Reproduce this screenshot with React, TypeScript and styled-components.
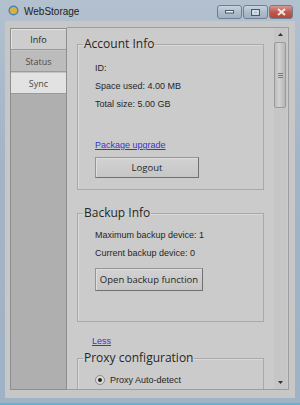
import styled, { createGlobalStyle } from 'styled-components';

const Global = createGlobalStyle`
  html, body { margin: 0; padding: 0; background: #9fb1c4; }
  body { font-family: 'Liberation Sans', Arial, sans-serif; }
`;

const Window = styled.div`
  width: 300px;
  height: 405px;
  box-sizing: border-box;
  display: flex;
  flex-direction: column;
  background: linear-gradient(180deg, #b3c1cf 0%, #a3b4c6 40%, #a0b2c5 100%);
  border-bottom: 2px solid #5fb4cf;
  overflow: hidden;
`;

const TitleBar = styled.div`
  height: 21px;
  display: flex;
  align-items: center;
  padding: 0 7px 0 8px;
  gap: 5px;
  flex-shrink: 0;
`;

const TitleText = styled.span`
  font-family: 'Liberation Sans', Arial, sans-serif;
  font-size: 10px;
  color: #1c1c1c;
  flex: 1;
  margin-top: 1px;
`;

const CaptionButtons = styled.div`
  display: flex;
  gap: 1px;
  align-self: flex-start;
  margin-top: 5px;
`;

const CaptionButton = styled.div<{ $close?: boolean }>`
  width: ${({ $close }) => ($close ? 22 : 23)}px;
  height: 12px;
  border: 1px solid #6f7f91;
  border-radius: 3px;
  display: flex;
  align-items: center;
  justify-content: center;
  background: ${({ $close }) =>
    $close
      ? 'linear-gradient(180deg, #d39a92 0%, #c05a4b 50%, #b4473a 100%)'
      : 'linear-gradient(180deg, #c8d3df 0%, #aebccb 50%, #a2b2c3 100%)'};
`;

const Client = styled.div`
  flex: 1;
  margin: 0 5px 5px 5px;
  background: #c7c7c7;
  display: flex;
  padding: 6px 6px 8px 5px;
  min-height: 0;
`;

const TabColumn = styled.div`
  width: 55px;
  background: #afafaf;
  border: 1px solid #8e8e8e;
  border-top: none;
  display: flex;
  flex-direction: column;
  margin-top: 1px;
`;

const Tab = styled.div<{ $bg: string; $active?: boolean }>`
  height: 20px;
  display: flex;
  align-items: center;
  justify-content: center;
  font-family: 'Open Sans', 'Noto Sans', sans-serif;
  font-size: 9px;
  color: ${({ $active }) => ($active ? '#222' : '#4a4a4a')};
  background: ${({ $bg }) => $bg};
  border-top: 1px solid ${({ $active }) => ($active ? '#8e8e8e' : '#c4c4c4')};
  border-bottom: 1px solid #9a9a9a;
  box-shadow: ${({ $active }) => ($active ? 'inset 1px 1px 0 #e2e2e2' : 'none')};
`;

const Panel = styled.div`
  flex: 1;
  display: flex;
  background: #cbcbcb;
  border: 1px solid #9d9d9d;
  border-left: none;
  min-height: 0;
  overflow: hidden;
`;

const Content = styled.div`
  flex: 1;
  padding: 8px 9px 0 10px;
  overflow: hidden;
  display: flex;
  flex-direction: column;
`;

const Group = styled.fieldset<{ $h: number; $top?: number }>`
  margin: ${({ $top }) => $top ?? 0}px 0 0;
  padding: 0 0 0 17px;
  border: 1px solid #a9a9a9;
  box-shadow: inset 1px 1px 0 #d9d9d9;
  height: ${({ $h }) => $h}px;
  box-sizing: border-box;
  flex-shrink: 0;
`;

const Legend = styled.legend`
  font-family: 'Open Sans', 'Noto Sans', sans-serif;
  font-size: 12px;
  color: #262626;
  padding: 0 1px;
  margin-left: -12px;
  line-height: 16px;
`;

const Line = styled.div<{ $top?: number }>`
  font-family: 'Liberation Sans', Arial, sans-serif;
  font-size: 9px;
  color: #262626;
  height: 18px;
  line-height: 18px;
  margin-top: ${({ $top }) => $top ?? 0}px;
`;

const Link = styled.a<{ $top?: number; $left?: number }>`
  display: block;
  font-family: 'Liberation Sans', Arial, sans-serif;
  font-size: 9px;
  color: #3636d0;
  text-decoration: underline;
  width: fit-content;
  margin-top: ${({ $top }) => $top ?? 0}px;
  margin-left: ${({ $left }) => $left ?? 0}px;
  line-height: 12px;
`;

const Button = styled.div<{ $w: number; $h: number; $top: number }>`
  width: ${({ $w }) => $w}px;
  height: ${({ $h }) => $h}px;
  margin-top: ${({ $top }) => $top}px;
  box-sizing: border-box;
  border: 1px solid #959595;
  border-right-color: #707070;
  border-bottom-color: #707070;
  background: linear-gradient(180deg, #d2d2d2 0%, #c6c6c6 100%);
  box-shadow: inset 1px 1px 0 #dedede;
  display: flex;
  align-items: center;
  justify-content: center;
  font-family: 'Open Sans', 'Noto Sans', sans-serif;
  font-size: 9.5px;
  color: #262626;
`;

const Radio = styled.div`
  display: flex;
  align-items: center;
  gap: 5px;
  font-family: 'Liberation Sans', Arial, sans-serif;
  font-size: 9px;
  color: #262626;
  margin-top: 9px;
`;

const RadioDot = styled.span`
  width: 8px;
  height: 8px;
  border-radius: 50%;
  border: 1px solid #8a8a8a;
  background: #dcdcdc;
  display: flex;
  align-items: center;
  justify-content: center;
  &::after {
    content: '';
    width: 4px;
    height: 4px;
    border-radius: 50%;
    background: #222;
  }
`;

const Scrollbar = styled.div`
  width: 13px;
  margin: 0 1px;
  display: flex;
  flex-direction: column;
  align-items: center;
  background: #c6c6c6;
`;

const Arrow = styled.div`
  height: 13px;
  display: flex;
  align-items: center;
  justify-content: center;
`;

const Track = styled.div`
  flex: 1;
  width: 100%;
  display: flex;
  flex-direction: column;
`;

const Thumb = styled.div`
  height: 66px;
  margin: 1px 0 0;
  width: 12px;
  box-sizing: border-box;
  border: 1px solid #9a9a9a;
  border-radius: 2px;
  background: linear-gradient(90deg, #bcbcbc 0%, #d2d2d2 40%, #b6b6b6 100%);
  display: flex;
  align-items: center;
  justify-content: center;
`;

export default function App() {
  return (
    <>
      <Global />
      <Window>
        <TitleBar>
          <svg width="11" height="11" viewBox="0 0 11 11">
            <circle cx="5.5" cy="5.5" r="5" fill="#4c7fb8" />
            <circle cx="5.5" cy="5.5" r="3.6" fill="#d8b43a" />
          </svg>
          <TitleText>WebStorage</TitleText>
          <CaptionButtons>
            <CaptionButton>
              <svg width="9" height="4" viewBox="0 0 9 4">
                <rect x="0.5" y="0.5" width="8" height="2.5" fill="#eef2f6" stroke="#4b5a6a" strokeWidth="1" />
              </svg>
            </CaptionButton>
            <CaptionButton>
              <svg width="9" height="7" viewBox="0 0 9 7">
                <rect x="0.5" y="0.5" width="8" height="6" fill="none" stroke="#4b5a6a" strokeWidth="1" />
                <rect x="2" y="2" width="5" height="3" fill="none" stroke="#eef2f6" strokeWidth="1" />
              </svg>
            </CaptionButton>
            <CaptionButton $close>
              <svg width="9" height="8" viewBox="0 0 9 8">
                <path d="M1 1 L8 7 M8 1 L1 7" stroke="#f3e7e4" strokeWidth="2" />
              </svg>
            </CaptionButton>
          </CaptionButtons>
        </TitleBar>
        <Client>
          <TabColumn>
            <Tab $bg="#cdcdcd" $active>Info</Tab>
            <Tab $bg="#bcbcbc">Status</Tab>
            <Tab $bg="#e2e2e2">Sync</Tab>
          </TabColumn>
          <Panel>
            <Content>
              <Group $h={154}>
                <Legend>Account Info</Legend>
                <Line $top={7}>ID:</Line>
                <Line>Space used: 4.00 MB</Line>
                <Line>Total size: 5.00 GB</Line>
                <Link $top={26}>Package upgrade</Link>
                <Button $w={104} $h={21} $top={6}>Logout</Button>
              </Group>
              <Group $h={117} $top={15}>
                <Legend>Backup Info</Legend>
                <Line $top={5}>Maximum backup device: 1</Line>
                <Line>Current backup device: 0</Line>
                <Button $w={108} $h={23} $top={6}>Open backup function</Button>
              </Group>
              <Link $top={13} $left={15}>Less</Link>
              <Group $h={60} $top={3}>
                <Legend>Proxy configuration</Legend>
                <Radio>
                  <RadioDot />
                  Proxy Auto-detect
                </Radio>
              </Group>
            </Content>
            <Scrollbar>
              <Arrow>
                <svg width="5" height="3" viewBox="0 0 5 3">
                  <path d="M0 3 L2.5 0 L5 3 Z" fill="#333" />
                </svg>
              </Arrow>
              <Track>
                <Thumb>
                  <svg width="5" height="5" viewBox="0 0 5 5">
                    <path d="M0 0.5 H5 M0 2.5 H5 M0 4.5 H5" stroke="#7a7a7a" strokeWidth="1" />
                  </svg>
                </Thumb>
              </Track>
              <Arrow>
                <svg width="5" height="3" viewBox="0 0 5 3">
                  <path d="M0 0 L2.5 3 L5 0 Z" fill="#333" />
                </svg>
              </Arrow>
            </Scrollbar>
          </Panel>
        </Client>
      </Window>
    </>
  );
}
